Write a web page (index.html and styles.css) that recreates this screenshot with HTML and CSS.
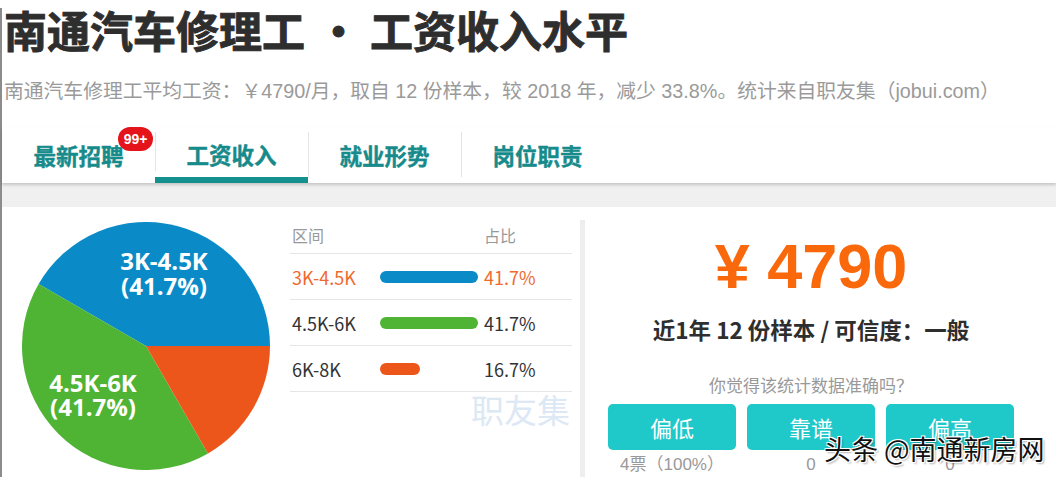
FILE: index.html
```html
<!DOCTYPE html>
<html lang="zh-CN">
<head>
    <meta charset="UTF-8">
    <meta name="viewport" content="width=device-width, initial-scale=1.0">
    <title>南通汽车修理工 • 工资收入水平</title>
    <link rel="stylesheet" href="styles.css">
</head>
<body>

<div class="page">
    <h1 class="title">南通汽车修理工<span class="dot">•</span>工资收入水平</h1>
    <p class="desc">南通汽车修理工平均工资：￥4790/月，取自 12 份样本，较 2018 年，减少 33.8%。统计来自职友集（jobui.com）</p>

    <div class="tabs">
        <div class="tab">最新招聘<span class="badge">99+</span></div>
        <div class="tab active">工资收入</div>
        <div class="tab">就业形势</div>
        <div class="tab">岗位职责</div>
    </div>
    <div class="band"></div>

    <div class="content">
        <div class="pie">
            <svg width="248" height="248" viewBox="0 0 248 248">
                <path d="M124,124 L248,124 A124,124 0 0 0 16.61,62 Z" fill="#0a8bc8"/>
                <path d="M124,124 L16.61,62 A124,124 0 0 0 186,231.39 Z" fill="#4fb334"/>
                <path d="M124,124 L186,231.39 A124,124 0 0 0 248,124 Z" fill="#ec561b"/>
                <text x="142" y="48" class="pie-label">3K-4.5K</text>
                <text x="142" y="73" class="pie-label">(41.7%)</text>
                <text x="71" y="170" class="pie-label">4.5K-6K</text>
                <text x="71" y="194" class="pie-label">(41.7%)</text>
            </svg>
        </div>

        <div class="dist">
            <div class="row head">
                <span class="c-range">区间</span>
                <span class="c-bar"></span>
                <span class="c-pct">占比</span>
            </div>
            <div class="row hot">
                <span class="c-range">3K-4.5K</span>
                <span class="c-bar"><i class="bar blue" style="width: 98px"></i></span>
                <span class="c-pct">41.7%</span>
            </div>
            <div class="row">
                <span class="c-range">4.5K-6K</span>
                <span class="c-bar"><i class="bar green" style="width: 98px"></i></span>
                <span class="c-pct">41.7%</span>
            </div>
            <div class="row">
                <span class="c-range">6K-8K</span>
                <span class="c-bar"><i class="bar orange" style="width: 40px"></i></span>
                <span class="c-pct">16.7%</span>
            </div>
            <div class="brand">职友集</div>
        </div>

        <div class="divider"></div>

        <div class="summary">
            <div class="price">¥ 4790</div>
            <div class="meta">近1年 12 份样本 / 可信度：一般</div>
            <div class="ask">你觉得该统计数据准确吗？</div>
            <div class="votes">
                <div class="vote">
                    <button class="btn">偏低</button>
                    <span class="count">4票（100%）</span>
                </div>
                <div class="vote">
                    <button class="btn">靠谱</button>
                    <span class="count">0</span>
                </div>
                <div class="vote">
                    <button class="btn">偏高</button>
                    <span class="count">0</span>
                </div>
            </div>
        </div>
    </div>

    <div class="stamp">头条 @南通新房网</div>
</div>

</body>
</html>
```

FILE: styles.css
```css
body {
    margin: 0;
    background: #ffffff;
    font-family: "Noto Sans CJK SC", sans-serif;
    color: #333333;
    overflow: hidden;
}
.page {
    position: relative;
    height: 477px;
    border-left: 2px solid #8c8c8c;
}
.title {
    margin: 8px 0 0 2px;
    font-size: 43px;
    line-height: 1;
    font-weight: 700;
    color: #2e2e2e;
    -webkit-text-stroke: 0.9px #2e2e2e;
    white-space: nowrap;
}
.title .dot {
    margin: 0 10px 0 12px;
}
.desc {
    margin: 30px 0 0 2px;
    font-family: "Liberation Sans", "Noto Sans CJK SC", sans-serif;
    font-size: 19.8px;
    line-height: 20px;
    color: #9a9a9a;
    white-space: nowrap;
}

/* tabs */
.tabs {
    position: relative;
    z-index: 1;
    display: flex;
    height: 56px;
    margin-top: 26px;
    background: #ffffff;
    box-shadow: 0 2px 3px rgba(0, 0, 0, 0.18);
}
.tab {
    position: relative;
    width: 153px;
    display: flex;
    align-items: center;
    justify-content: center;
    font-size: 22.5px;
    font-weight: 700;
    color: #178b8b;
    -webkit-text-stroke: 0.4px #178b8b;
    box-sizing: border-box;
}
.tab + .tab::before {
    content: "";
    position: absolute;
    left: 0;
    top: 5px;
    bottom: 6px;
    width: 1px;
    background: #e4e4e4;
}
.tab.active {
    border-bottom: 6px solid #14908f;
    padding-top: 4px;
}
.badge {
    position: absolute;
    left: 116px;
    top: 0;
    width: 35px;
    height: 24px;
    border-radius: 12px;
    background: #e5141b;
    color: #ffffff;
    -webkit-text-stroke: 0;
    font-family: "Liberation Sans", sans-serif;
    font-size: 14px;
    font-weight: 700;
    line-height: 24px;
    text-align: center;
}
.band {
    height: 24px;
    background: #f0f0f0;
}

/* content */
.content {
    display: flex;
    align-items: flex-start;
}
.pie {
    margin: 15px 0 0 20px;
    width: 248px;
    height: 248px;
}
.pie svg {
    display: block;
}
.pie-label {
    fill: #ffffff;
    font-family: "Open Sans", sans-serif;
    font-size: 24px;
    font-weight: 700;
    text-anchor: middle;
}

.dist {
    width: 282px;
    margin: 15px 0 0 20px;
}
.row {
    display: flex;
    align-items: center;
    height: 45px;
    border-bottom: 1px solid #e6e6e6;
    font-family: "Noto Sans CJK SC", sans-serif;
    font-size: 18px;
    color: #333333;
}
.row.head {
    height: 30px;
    color: #999999;
    font-size: 16px;
    align-items: flex-start;
    padding-top: 1px;
}
.row.hot {
    color: #ee6a2f;
}
.c-range {
    width: 90px;
    padding-left: 2px;
    box-sizing: border-box;
}
.c-bar {
    width: 104px;
    display: flex;
}
.c-pct {
    flex: 1;
}
.bar {
    display: block;
    height: 12px;
    border-radius: 6px;
}
.bar.blue { background: #0a8bc8; }
.bar.green { background: #4fb334; }
.bar.orange { background: #ec561b; }
.brand {
    margin-top: 1px;
    padding-right: 2px;
    text-align: right;
    font-size: 33px;
    line-height: 1;
    color: #dde8f5;
}

.divider {
    width: 5px;
    height: 257px;
    margin: 13px 0 0 8px;
    background: #eeeeee;
}

.summary {
    width: 452px;
    padding-top: 28px;
    text-align: center;
}
.price {
    font-family: "Liberation Sans", sans-serif;
    font-size: 63px;
    font-weight: 700;
    line-height: 1;
    color: #fa680c;
}
.meta {
    margin-top: 20px;
    font-size: 22.5px;
    font-weight: 700;
    line-height: 23px;
    color: #2e2e2e;
}
.ask {
    margin-top: 35px;
    font-size: 17px;
    line-height: 17px;
    color: #999999;
}
.votes {
    display: flex;
    justify-content: center;
    gap: 11px;
    margin-top: 11px;
}
.vote {
    width: 128px;
    display: flex;
    flex-direction: column;
    align-items: center;
}
.btn {
    width: 128px;
    height: 46px;
    border: none;
    border-radius: 5px;
    background: #1fc8c9;
    color: #ffffff;
    font-family: "Noto Sans CJK SC", sans-serif;
    font-size: 22px;
    padding: 0;
}
.count {
    margin-top: 6px;
    font-family: "Liberation Sans", "Noto Sans CJK SC", sans-serif;
    font-size: 17px;
    line-height: 17px;
    color: #999999;
}

.stamp {
    position: absolute;
    left: 822px;
    top: 425px;
    font-size: 27px;
    line-height: 1.2;
    color: #111111;
    text-shadow: 1px 1px 0 #ffffff, -1px -1px 0 #ffffff, 1px -1px 0 #ffffff, -1px 1px 0 #ffffff, 2px 2px 2px rgba(0, 0, 0, 0.3);
    white-space: nowrap;
}
```
